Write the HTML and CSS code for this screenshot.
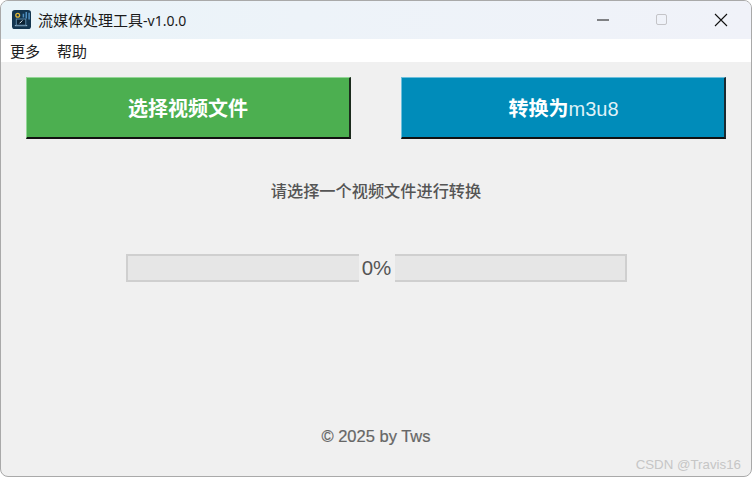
FILE: index.html
```html
<!DOCTYPE html>
<html lang="zh-CN">
<head>
  <meta charset="UTF-8">
  <title>流媒体处理工具</title>
  <link rel="stylesheet" href="styles.css">
</head>
<body>
  <div class="window">
    <!-- Title bar -->
    <div class="titlebar">
      <svg class="app-icon" width="19" height="19" viewBox="0 0 20 20">
        <rect width="20" height="20" rx="3" fill="#12354f"/>
        <path d="M3 16.5h13" stroke="#b9d3e3" stroke-width="1"/>
        <rect x="4.5" y="9.5" width="10" height="6.5" fill="#0b2233" stroke="#5f8cab" stroke-width="1"/>
        <path d="M8 14l3-3" stroke="#e8f0f5" stroke-width="1"/>
        <circle cx="6" cy="5.5" r="2" fill="none" stroke="#e0b83a" stroke-width="1.4"/>
        <path d="M12 8V4M15 9V2M18 10V3" stroke="#4f8fc0" stroke-width="1.6"/>
      </svg>
      <span class="app-title">流媒体处理工具<span class="app-version">-v1.0.0</span></span>
      <div class="window-controls">
        <svg width="14" height="14" viewBox="0 0 14 14"><path d="M1 7h12" stroke="#111" stroke-width="1"/></svg>
        <svg width="14" height="14" viewBox="0 0 14 14"><rect x="1.5" y="1.5" width="10" height="10" rx="1.5" fill="none" stroke="#c4c4c8" stroke-width="1"/></svg>
        <svg width="14" height="14" viewBox="0 0 14 14"><path d="M1 1l12 12M13 1L1 13" stroke="#111" stroke-width="1.1"/></svg>
      </div>
    </div>

    <!-- Menu -->
    <nav class="menubar">
      <a href="#more">更多</a>
      <a href="#help">帮助</a>
    </nav>

    <div class="content">
      <div class="actions">
        <button class="btn btn-green">选择视频文件</button>
        <button class="btn btn-blue">转换为<span class="latin">m3u8</span></button>
      </div>

      <p class="status">请选择一个视频文件进行转换</p>

      <div class="progress">
        <div class="progress-track"></div>
        <span class="progress-label">0%</span>
        <div class="progress-track"></div>
      </div>

      <p class="copyright">© 2025 by Tws</p>
      <span class="watermark">CSDN @Travis16</span>
    </div>
  </div>
</body>
</html>
```

FILE: styles.css
```css
html, body {
  margin: 0;
  padding: 0;
  background-color: #fff;
}

body {
  width: 752px;
  height: 477px;
  overflow: hidden;
  font-family: "Liberation Sans", "Noto Sans CJK SC", sans-serif;
}

.window {
  position: relative;
  box-sizing: border-box;
  width: 752px;
  height: 477px;
  display: flex;
  flex-direction: column;
  border: 1px solid #a9a9a9;
  border-radius: 8px;
  overflow: hidden;
  background-color: #f0f0f0;
}

/* Title bar */
.titlebar {
  display: flex;
  align-items: center;
  height: 38px;
  flex: none;
  padding-left: 11px;
  background: linear-gradient(90deg, #e9f4f9 0%, #edf3f9 40%, #f0f2f9 100%);
}

.app-icon {
  flex: none;
  margin-top: -1px;
}

.app-title {
  margin-left: 7px;
  margin-top: -1px;
  font-family: "Noto Sans", "Noto Sans CJK SC", sans-serif;
  font-size: 15px;
  color: #1a1a1a;
}

.app-version {
  font-size: 14px;
}

.window-controls {
  display: flex;
  align-items: center;
  gap: 45px;
  margin-left: auto;
  margin-right: 23px;
  margin-top: -1px;
}

/* Menu */
.menubar {
  display: flex;
  align-items: center;
  gap: 17px;
  height: 23px;
  flex: none;
  padding-left: 9px;
  background-color: #fff;
}

.menubar a {
  font-family: "Noto Sans CJK SC", sans-serif;
  font-size: 15px;
  color: #222;
  text-decoration: none;
}

/* Main area */
.content {
  flex: 1;
  display: flex;
  flex-direction: column;
  align-items: center;
  position: relative;
}

.actions {
  display: flex;
  gap: 50px;
  margin-top: 15px;
}

.btn {
  box-sizing: border-box;
  width: 325px;
  height: 62px;
  padding: 0;
  border-style: solid;
  border-width: 1px 2px 2px 1px;
  font-family: "Liberation Sans", "Noto Sans CJK SC", sans-serif;
  font-size: 20px;
  font-weight: bold;
  color: #fff;
  cursor: pointer;
}

.btn-green {
  background-color: #4caf50;
  border-color: #93d696 #1c2a1d #111 #93d696;
}

.btn-blue {
  background-color: #008cba;
  border-color: #6cbfdc #1c2a30 #111 #6cbfdc;
}

.latin {
  font-weight: normal;
  margin-right: -1px;
  color: #dff1f7;
}

.status {
  margin: 39px 0 0;
  height: 24px;
  line-height: 24px;
  font-family: "Noto Sans CJK SC", sans-serif;
  font-size: 16.2px;
  font-weight: 500;
  color: #555;
}

.progress {
  display: flex;
  align-items: stretch;
  width: 501px;
  height: 28px;
  margin-top: 52px;
}

.progress-track {
  flex: 1;
  background-color: #e6e6e6;
  border: 2px solid #cfcfcf;
  box-sizing: border-box;
}

.progress-track:first-child {
  border-right: none;
  flex-basis: 233px;
  flex-grow: 0;
}

.progress-track:last-child {
  border-left: none;
}

.progress-label {
  width: 36px;
  flex: none;
  text-align: center;
  line-height: 27px;
  font-size: 20.5px;
  color: #555;
}

.copyright {
  margin: auto 0 0;
  padding-bottom: 30px;
  font-size: 16.5px;
  -webkit-text-stroke: 0.2px #666;
  color: #666;
}

/* CSDN watermark sits over the window */
.watermark {
  position: absolute;
  right: 10px;
  bottom: 4px;
  font-size: 13.3px;
  color: #c6c6c6;
}
```
